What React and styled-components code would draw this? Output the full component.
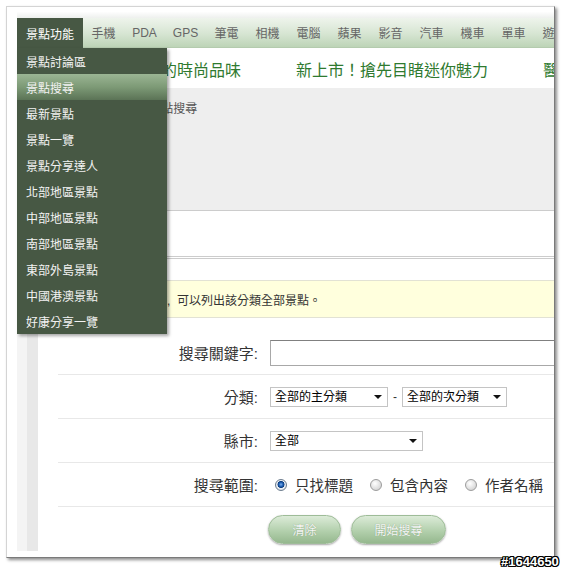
import styled, { createGlobalStyle } from "styled-components";

const GlobalStyle = createGlobalStyle`
  html, body {
    margin: 0;
    padding: 0;
    background: #fff;
  }
  body {
    font-family: "Liberation Sans", "Noto Sans CJK TC", sans-serif;
    color: #333;
  }
`;

const navItems = ["手機", "PDA", "GPS", "筆電", "相機", "電腦", "蘋果", "影音", "汽車", "機車", "單車", "遊戲"];

const menuItems = [
  "景點討論區",
  "景點搜尋",
  "最新景點",
  "景點一覽",
  "景點分享達人",
  "北部地區景點",
  "中部地區景點",
  "南部地區景點",
  "東部外島景點",
  "中國港澳景點",
  "好康分享一覽",
];

const headlines = ["展現獨特的時尚品味", "新上市！搶先目睹迷你魅力", "醫美保養新知大公開"];

export default () => {
  return (
    <Page>
      <GlobalStyle />
      <Frame>
        <Content>
          <TopBar />
          <Nav>
            <NavItem $active>景點功能</NavItem>
            {navItems.map((n) => (
              <NavItem key={n}>{n}</NavItem>
            ))}
          </Nav>
          <Headlines>
            {headlines.map((h) => (
              <Headline key={h}>{h}</Headline>
            ))}
          </Headlines>
          <Body>
            <Strip />
            <Main>
              <Crumb>首頁 &gt; 景點功能 &gt; 景點搜尋</Crumb>
              <TitleGap />
              <DoubleRule />
              <Notice>當您只選擇分類時,&nbsp;&nbsp;可以列出該分類全部景點。</Notice>
              <Form>
                <Row>
                  <Label>搜尋關鍵字:</Label>
                  <TextInput type="text" />
                </Row>
                <Row>
                  <Label>分類:</Label>
                  <Controls>
                    <SelectWrap $w={118}>
                      <Select defaultValue="a">
                        <option value="a">全部的主分類</option>
                      </Select>
                      <Caret />
                    </SelectWrap>
                    <Dash>-</Dash>
                    <SelectWrap $w={105}>
                      <Select defaultValue="a">
                        <option value="a">全部的次分類</option>
                      </Select>
                      <Caret />
                    </SelectWrap>
                  </Controls>
                </Row>
                <Row>
                  <Label>縣市:</Label>
                  <Controls>
                    <SelectWrap $w={153}>
                      <Select defaultValue="a">
                        <option value="a">全部</option>
                      </Select>
                      <Caret />
                    </SelectWrap>
                  </Controls>
                </Row>
                <Row>
                  <Label>搜尋範圍:</Label>
                  <Controls>
                    <RadioLabel>
                      <Radio type="radio" name="scope" defaultChecked />
                      只找標題
                    </RadioLabel>
                    <RadioLabel>
                      <Radio type="radio" name="scope" />
                      包含內容
                    </RadioLabel>
                    <RadioLabel>
                      <Radio type="radio" name="scope" />
                      作者名稱
                    </RadioLabel>
                  </Controls>
                </Row>
                <Row $last>
                  <span />
                  <Buttons>
                    <PillButton $w={73}>清除</PillButton>
                    <PillButton $w={95}>開始搜尋</PillButton>
                  </Buttons>
                </Row>
              </Form>
            </Main>
          </Body>
          <Menu>
            {menuItems.map((m, i) => (
              <MenuItem key={m} $active={i === 1}>
                {m}
              </MenuItem>
            ))}
          </Menu>
        </Content>
      </Frame>
      <Watermark>#1644650</Watermark>
    </Page>
  );
};

const Page = styled.div`
  position: relative;
  width: 567px;
  height: 568px;
  overflow: hidden;
`;

const Frame = styled.div`
  box-sizing: border-box;
  margin: 6px 0 0 6px;
  width: 549px;
  height: 552px;
  border: 1px solid #d4d4d4;
  border-right-color: #7a7a7a;
  border-bottom-color: #7a7a7a;
  box-shadow: 2px 2px 3px rgba(0, 0, 0, 0.45);
  padding-left: 10px;
  overflow: hidden;
  background: #fff;
`;

const Content = styled.div`
  position: relative;
  width: 620px;
`;

const TopBar = styled.div`
  height: 11px;
  background: linear-gradient(#fff 40%, #eef0ee);
`;

const Nav = styled.div`
  display: flex;
  height: 30px;
  background: linear-gradient(#eef4ec, #d6e5d2 55%, #bdd4b7);
  border-bottom: 1px solid #b4cbae;
  box-sizing: border-box;
  white-space: nowrap;
`;

const NavItem = styled.div`
  display: flex;
  align-items: center;
  justify-content: center;
  flex: none;
  width: ${(p) => (p.$active ? "66px" : "41px")};
  font-size: 12px;
  color: ${(p) => (p.$active ? "#fff" : "#666")};
  background: ${(p) => (p.$active ? "#475844" : "transparent")};
  margin-bottom: ${(p) => (p.$active ? "-1px" : "0")};
`;

const Headlines = styled.div`
  display: flex;
  gap: 55px;
  height: 40px;
  box-sizing: border-box;
  padding: 14px 0 0 80px;
  white-space: nowrap;
`;

const Headline = styled.div`
  font-size: 16px;
  line-height: 18px;
  color: #2f7a2f;
`;

const Body = styled.div`
  display: flex;
`;

const Strip = styled.div`
  flex: none;
  width: 21px;
  background: linear-gradient(to right, #f4f4f4 0 10px, #e8e8e8 10px);
`;

const Main = styled.div`
  flex: 1;
  min-width: 0;
`;

const Crumb = styled.div`
  height: 123px;
  box-sizing: border-box;
  background: #eee;
  border-bottom: 1px solid #ccc;
  padding: 14px 0 0 12px;
  font-size: 12px;
  line-height: 14px;
  color: #555;
`;

const TitleGap = styled.div`
  height: 45px;
`;

const DoubleRule = styled.div`
  height: 1px;
  border-top: 1px solid #ccc;
  border-bottom: 1px solid #ccc;
`;

const Notice = styled.div`
  margin-top: 21px;
  height: 38px;
  box-sizing: border-box;
  display: flex;
  align-items: center;
  padding-left: 33px;
  background: #ffffdd;
  border-top: 1px solid #e2e2d4;
  border-bottom: 1px solid #e2e2d4;
  font-size: 12px;
  color: #333;
  white-space: nowrap;
`;

const Form = styled.div`
  margin: 13px 0 0 20px;
`;

const Row = styled.div`
  display: grid;
  grid-template-columns: 200px 1fr;
  column-gap: 12px;
  align-items: center;
  height: 44px;
  box-sizing: border-box;
  border-bottom: ${(p) => (p.$last ? "none" : "1px solid #e8e8e8")};
`;

const Label = styled.div`
  text-align: right;
  font-size: 15px;
  color: #333;
`;

const Controls = styled.div`
  display: flex;
  align-items: center;
`;

const TextInput = styled.input`
  box-sizing: border-box;
  width: 300px;
  height: 26px;
  border: 1px solid #a8a8a8;
  border-top-color: #808080;
  background: #fff;
  padding: 0 4px;
  outline: none;
`;

const SelectWrap = styled.div`
  position: relative;
  width: ${(p) => p.$w}px;
  height: 20px;
`;

const Select = styled.select`
  appearance: none;
  box-sizing: border-box;
  width: 100%;
  height: 100%;
  border: 1px solid #c4c4c4;
  border-radius: 0;
  background: #fff;
  padding: 0 0 0 4px;
  font-family: "Liberation Sans", "Noto Sans CJK TC", sans-serif;
  font-size: 12px;
  color: #000;
  outline: none;
`;

const Caret = styled.span`
  position: absolute;
  right: 6px;
  top: 8px;
  width: 0;
  height: 0;
  border-left: 4px solid transparent;
  border-right: 4px solid transparent;
  border-top: 4px solid #111;
  pointer-events: none;
`;

const Dash = styled.span`
  width: 14px;
  text-align: center;
  font-size: 12px;
  color: #333;
`;

const RadioLabel = styled.label`
  display: flex;
  align-items: center;
  gap: 8px;
  margin-right: 12px;
  font-size: 14.5px;
  color: #333;
  white-space: nowrap;
`;

const Radio = styled.input`
  appearance: none;
  margin: 0 0 0 5px;
  width: 12px;
  height: 12px;
  border-radius: 50%;
  border: 1px solid #9c9c9c;
  box-sizing: border-box;
  background: radial-gradient(circle at 40% 35%, #fff, #c9c9c9);

  &:checked {
    border-color: #6d7d8e;
    background: radial-gradient(
      circle at 50% 45%,
      #7eb2ee 0,
      #1f5fb4 2px,
      #0c3c7c 3.2px,
      #eef2f7 3.8px,
      #c6ccd4 100%
    );
  }
`;

const Buttons = styled.div`
  display: flex;
  gap: 10px;
  margin-left: -2px;
`;

const PillButton = styled.button`
  width: ${(p) => p.$w}px;
  height: 29px;
  border: 1px solid #9ebc98;
  border-radius: 15px;
  background: linear-gradient(#dcebd8, #b3d0ad 55%, #95b88e);
  box-shadow: 0 1px 2px rgba(0, 0, 0, 0.35);
  font-family: "Liberation Sans", "Noto Sans CJK TC", sans-serif;
  font-size: 12px;
  color: #f6f6f6;
  text-shadow: 0 0 1px #7a9a74;
  padding: 0;
`;

const Menu = styled.div`
  position: absolute;
  left: 0;
  top: 41px;
  width: 150px;
  background: #475844;
  box-shadow: 2px 2px 3px rgba(0, 0, 0, 0.35);
`;

const MenuItem = styled.div`
  height: 26px;
  display: flex;
  align-items: center;
  padding-left: 9px;
  font-size: 12px;
  color: #f2f2f2;
  background: ${(p) => (p.$active ? "linear-gradient(#9bb594, #7d9a76 50%, #5b7356)" : "transparent")};
`;

const Watermark = styled.div`
  position: absolute;
  left: 501px;
  top: 555px;
  font-family: "Liberation Sans", sans-serif;
  font-weight: bold;
  font-size: 13px;
  line-height: 13px;
  color: #fff;
  text-shadow: -1px 0 #000, 1px 0 #000, 0 -1px #000, 0 1px #000, -1px -1px #000, 1px 1px #000, 1px -1px #000, -1px 1px #000;
`;
